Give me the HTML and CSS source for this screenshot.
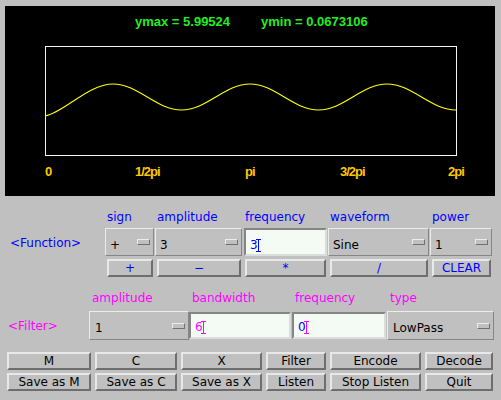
FILE: index.html
```html
<!DOCTYPE html>
<html>
<head>
<meta charset="utf-8">
<link rel="stylesheet" href="styles.css">
</head>
<body>
<svg class="plot" width="490" height="190" viewBox="0 0 490 190">
  <text class="stat" x="130" y="20">ymax = 5.99524</text>
  <text class="stat" x="256" y="20">ymin = 0.0673106</text>
  <rect class="frame" x="40.5" y="40.5" width="411" height="109"/>
  <path class="curve" d="M40,110 C60,106 83,78 108,78 C133,78 151.5,104 176.5,104 C201.5,104 220,78 245,78 C270,78 288.5,104 313.5,104 C338.5,104 357,78 382,78 C407,78 426,104 451,104"/>
  <text class="axis" x="40" y="170">0</text>
  <text class="axis" x="130" y="170">1/2pi</text>
  <text class="axis" x="240" y="170">pi</text>
  <text class="axis" x="335" y="170">3/2pi</text>
  <text class="axis" x="443" y="170">2pi</text>
</svg>

<section class="func">
  <div></div>
  <div class="lbl">sign</div>
  <div class="lbl">amplitude</div>
  <div class="lbl">frequency</div>
  <div class="lbl">waveform</div>
  <div class="lbl">power</div>

  <div class="sect">&lt;Function&gt;</div>
  <div class="menu"><span class="val">+</span><span class="ind"></span></div>
  <div class="menu"><span class="val">3</span><span class="ind"></span></div>
  <div class="field">3<span class="caret"></span></div>
  <div class="menu"><span class="val">Sine</span><span class="ind"></span></div>
  <div class="menu"><span class="val">1</span><span class="ind"></span></div>

  <div></div>
  <div class="btn">+</div>
  <div class="btn">&minus;</div>
  <div class="btn">*</div>
  <div class="btn">/</div>
  <div class="btn">CLEAR</div>
</section>

<section class="filt">
  <div></div>
  <div class="lbl">amplitude</div>
  <div class="lbl">bandwidth</div>
  <div class="lbl">frequency</div>
  <div class="lbl">type</div>

  <div class="sect">&lt;Filter&gt;</div>
  <div class="menu"><span class="val">1</span><span class="ind"></span></div>
  <div class="field"><span class="mag">6</span><span class="caret mag"></span></div>
  <div class="field">0<span class="caret mag"></span></div>
  <div class="menu"><span class="val">LowPass</span><span class="ind"></span></div>
</section>

<section class="actions">
  <div class="btn">M</div>
  <div class="btn">C</div>
  <div class="btn">X</div>
  <div class="btn">Filter</div>
  <div class="btn">Encode</div>
  <div class="btn">Decode</div>
  <div class="btn">Save as M</div>
  <div class="btn">Save as C</div>
  <div class="btn">Save as X</div>
  <div class="btn">Listen</div>
  <div class="btn">Stop Listen</div>
  <div class="btn">Quit</div>
</section>
</body>
</html>
```

FILE: styles.css
```css
html, body {
  margin: 0;
  padding: 0;
}
body {
  width: 501px;
  height: 400px;
  overflow: hidden;
  background: #c0c0c0;
  font-family: "DejaVu Sans", sans-serif;
  font-size: 12px;
  line-height: 14px;
}

.plot {
  display: block;
  margin: 6px 0 0 5px;
  background: #000;
}
.stat {
  font-family: "Liberation Sans", Arial, sans-serif;
  font-weight: bold;
  font-size: 13px;
  fill: #22ee22;
}
.axis {
  font-family: "Liberation Sans", Arial, sans-serif;
  font-weight: bold;
  font-size: 13px;
  letter-spacing: -1px;
  fill: #ffc800;
}
.frame {
  fill: none;
  stroke: #f4f4f4;
  stroke-width: 1;
}
.curve {
  fill: none;
  stroke: #ffff00;
  stroke-width: 1.1;
}

/* function section */
.func {
  display: grid;
  grid-template-columns: 100px 49px 87px 84px 101px 62px;
  grid-template-rows: 18px 31px 18px;
  column-gap: 1px;
  padding-left: 4px;
  margin-top: 14px;
}
.filt {
  display: grid;
  grid-template-columns: 85px 100px 103px 95px 107px;
  grid-template-rows: 20px 29px;
  padding-left: 4px;
  margin-top: 14px;
}

.lbl {
  color: #0000ff;
  padding-left: 2px;
}
.filt .lbl {
  color: #ff00ff;
  padding-left: 3px;
}

.sect {
  color: #0000ff;
  height: 28px;
  line-height: 28px;
  padding-left: 6px;
  padding-top: 1px;
  box-sizing: border-box;
}
.filt .sect {
  color: #ff00ff;
  padding-left: 4px;
  height: 29px;
  line-height: 29px;
}

.menu {
  height: 28px;
  box-sizing: border-box;
  border: 1px solid;
  border-color: #ececec #858585 #858585 #ececec;
  display: flex;
  align-items: center;
  padding: 0 3px 0 4px;
  color: #000;
}
.filt .menu {
  height: 29px;
  padding-left: 5px;
}
.menu .val {
  flex: 1;
  align-self: stretch;
  padding-top: 9px;
  white-space: nowrap;
}
.ind {
  width: 13px;
  height: 6px;
  box-sizing: border-box;
  border: 1px solid;
  border-color: #ececec #707070 #707070 #ececec;
  background: #c0c0c0;
}

.field {
  height: 28px;
  box-sizing: border-box;
  margin-left: 1px;
  border: 2px solid;
  border-color: #858585 #dcdcdc #dcdcdc #858585;
  background: #f4fbf4;
  color: #0000ff;
  padding: 8px 0 0 4px;
  white-space: nowrap;
}
.filt .field {
  height: 27px;
  margin: 1px 1px 0 0;
  padding-top: 6px;
}
.mag {
  color: #ff00ff;
}
.caret {
  display: inline-block;
  width: 5px;
  height: 13px;
  box-sizing: border-box;
  border-top: 1px solid currentColor;
  border-bottom: 1px solid currentColor;
  background: linear-gradient(currentColor, currentColor) center / 1px 100% no-repeat;
  margin-left: -2px;
  vertical-align: -3px;
}

.btn {
  height: 18px;
  box-sizing: border-box;
  border: 2px solid;
  border-color: #e8e8e8 #6e6e6e #6e6e6e #e8e8e8;
  background: #c0c0c0;
  display: flex;
  align-items: center;
  justify-content: center;
  color: #0000ff;
  margin: 0 1px 0 2px;
  white-space: nowrap;
}

.actions {
  display: grid;
  grid-template-columns: 84px 82px 81px 60px 91px 68px;
  grid-auto-rows: 18px;
  column-gap: 4px;
  row-gap: 3px;
  padding-left: 7px;
  margin-top: 12px;
}
.actions .btn {
  margin: 0;
  color: #000;
}
```
